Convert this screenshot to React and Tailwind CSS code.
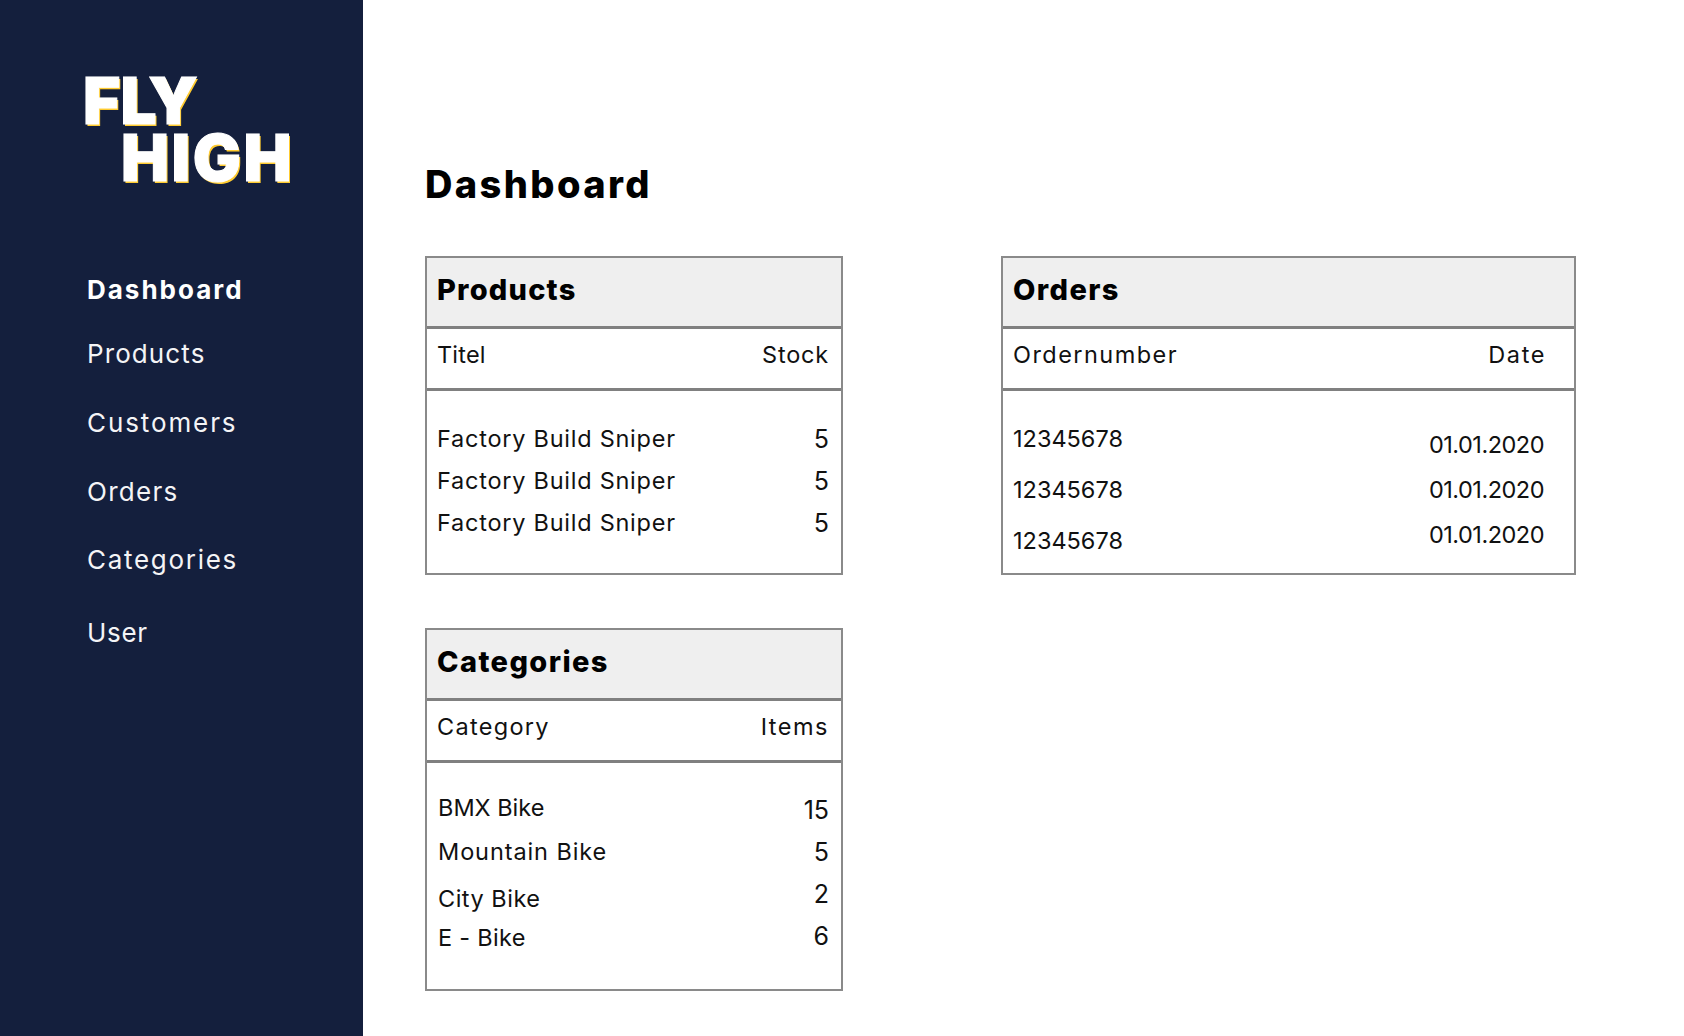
const font = "font-['Inter','Liberation_Sans',sans-serif]";
const body = "text-[23.5px] leading-[30px] text-[#111]";

function CardHead({ title, titleClass, left, leftClass, right, rightClass, padClass = "pr-[12px]" }) {
  return (
    <>
      <div className="h-[71px] bg-[#efefef] border-b-[3px] border-[#808080] pl-[10px] flex items-center pb-[5px]">
        <h2 className={`text-[29px] leading-none font-extrabold text-black ${titleClass}`}>{title}</h2>
      </div>
      <div className={`h-[62px] border-b-[3px] border-[#808080] pl-[10px] ${padClass} flex items-start justify-between pt-[11px] ${body}`}>
        <span className={leftClass}>{left}</span>
        <span className={rightClass}>{right}</span>
      </div>
    </>
  );
}

function Products() {
  const rows = [0, 1, 2];
  return (
    <section className="w-[418px] h-[319px] border-2 border-[#8a8a8a]">
      <CardHead title="Products" titleClass="tracking-[1.2px]" left="Titel" leftClass="tracking-[0.2px]" right="Stock" rightClass="tracking-[0.8px]" />
      <div className={`pl-[10px] pr-[12px] pt-[33px] flex flex-col gap-[12px] ${body}`}>
        {rows.map((r) => (
          <div key={r} className="flex justify-between">
            <span className="tracking-[0.75px]">Factory Build Sniper</span>
            <span className="text-[25px]">5</span>
          </div>
        ))}
      </div>
    </section>
  );
}

function Orders() {
  return (
    <section className="w-[575px] h-[319px] border-2 border-[#8a8a8a]">
      <CardHead title="Orders" titleClass="tracking-[1.4px]" left="Ordernumber" leftClass="tracking-[1.45px]" right="Date" rightClass="tracking-[1.6px] mr-[-2px]" padClass="pr-[30px]" />
      <div className={`pl-[10px] pr-[30px] pt-[33px] flex justify-between ${body}`}>
        <div className="flex flex-col gap-[21px]">
          <span>12345678</span>
          <span>12345678</span>
          <span>12345678</span>
        </div>
        <div className="flex flex-col gap-[15px] pt-[6px] tracking-[-0.5px]">
          <span>01.01.2020</span>
          <span>01.01.2020</span>
          <span>01.01.2020</span>
        </div>
      </div>
    </section>
  );
}

function Categories() {
  return (
    <section className="w-[418px] h-[363px] border-2 border-[#8a8a8a]">
      <CardHead title="Categories" titleClass="tracking-[1.4px]" left="Category" leftClass="tracking-[1.3px]" right="Items" rightClass="tracking-[1.5px]" />
      <div className={`pl-[11px] pr-[12px] pt-[30px] flex justify-between ${body}`}>
        <div className="flex flex-col">
          <span>BMX Bike</span>
          <span className="mt-[14px] tracking-[0.9px]">Mountain Bike</span>
          <span className="mt-[17px] tracking-[0.5px]">City Bike</span>
          <span className="mt-[9px] tracking-[0.3px]">E - Bike</span>
        </div>
        <div className="flex flex-col items-end pt-[2px] gap-[12px] text-[25px]">
          <span>15</span>
          <span>5</span>
          <span>2</span>
          <span>6</span>
        </div>
      </div>
    </section>
  );
}

export default function App() {
  return (
    <div className={`${font} flex w-full min-h-[1036px] bg-white`}>
      <aside className="w-[363px] shrink-0 bg-[#141f3d] text-white pt-[72px] pl-[83px]">
        <div className="font-black text-[64px] leading-[57px] [-webkit-text-stroke:1px_white] [text-shadow:1.5px_1.5px_0_#ffcb2f]">
          <div>FLY</div>
          <div className="pl-[38px] tracking-[2.5px]">HIGH</div>
        </div>
        <nav className="mt-[88px] pl-[4px] text-[26px] leading-[32px] text-[#f4f4f6] flex flex-col">
          <span className="font-bold text-white tracking-[2px]">Dashboard</span>
          <span className="mt-[32px] tracking-[1.1px]">Products</span>
          <span className="mt-[37px] tracking-[1.9px]">Customers</span>
          <span className="mt-[37px] tracking-[1.3px]">Orders</span>
          <span className="mt-[36px] tracking-[1.7px]">Categories</span>
          <span className="mt-[41px] tracking-[0.7px]">User</span>
        </nav>
      </aside>
      <main className="flex-1 pl-[62px] pt-[160px]">
        <h1 className="text-[38px] leading-[48px] font-extrabold text-black tracking-[2.4px]">Dashboard</h1>
        <div className="mt-[48px] flex items-start gap-[158px]">
          <div className="flex flex-col gap-[53px]">
            <Products />
            <Categories />
          </div>
          <Orders />
        </div>
      </main>
    </div>
  );
}
